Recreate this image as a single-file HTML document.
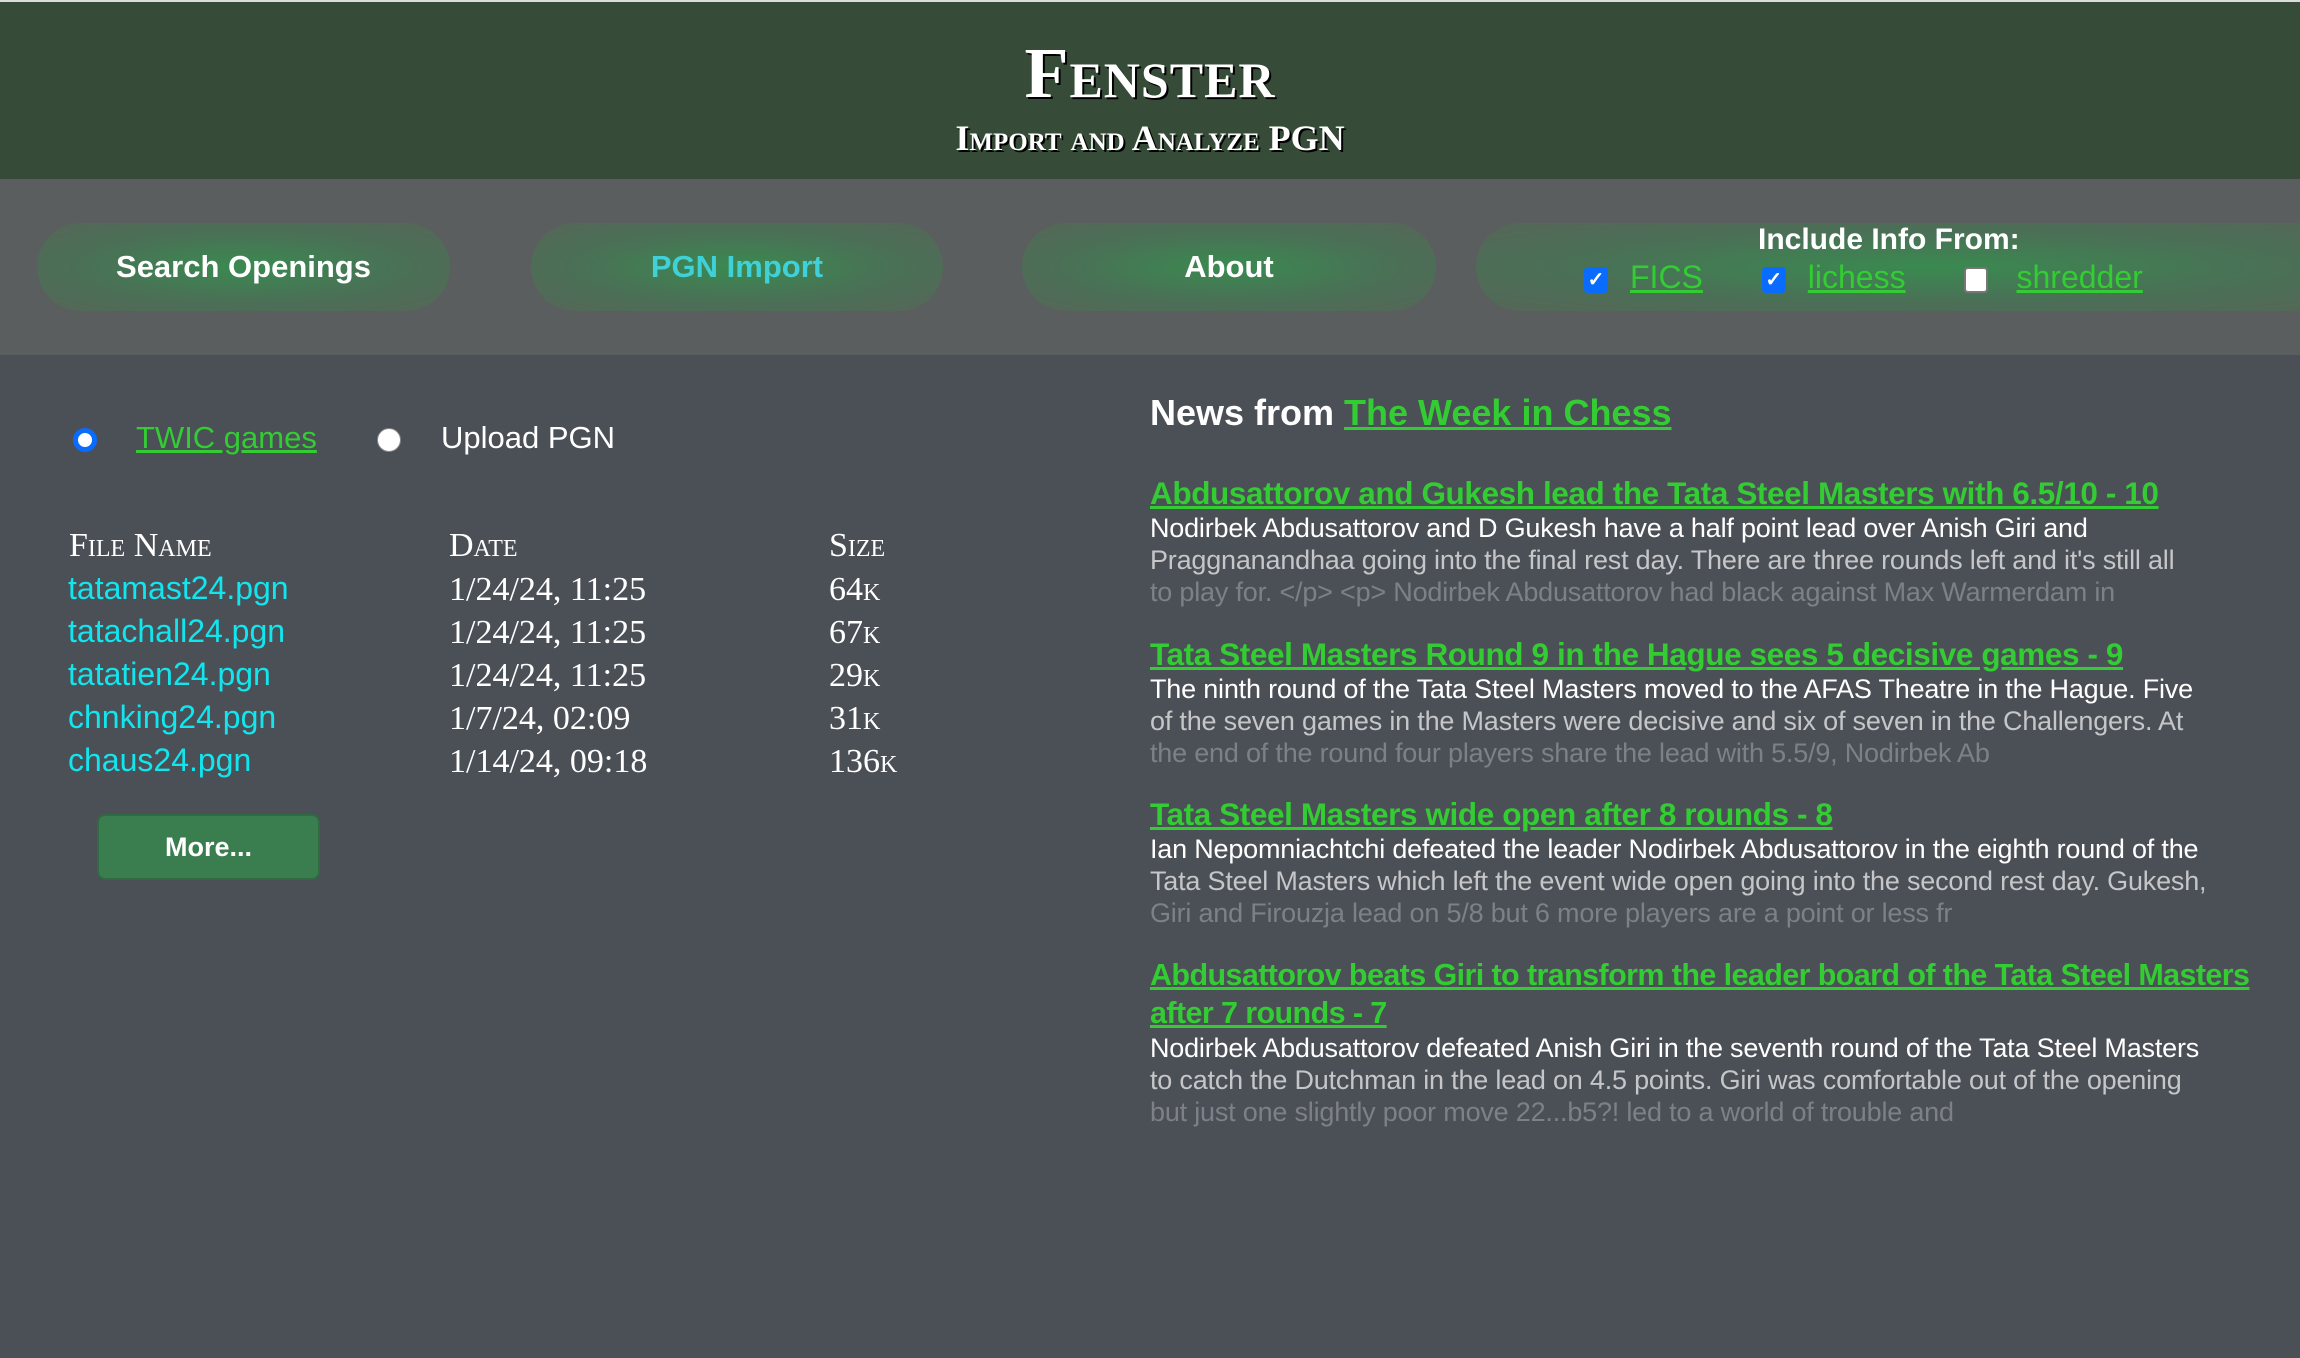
<!DOCTYPE html>
<html><head><meta charset="utf-8">
<style>
*{margin:0;padding:0;box-sizing:border-box}
html,body{width:2300px;height:1358px;overflow:hidden;background:#4b4f56;font-family:"Liberation Sans",sans-serif}
.top{position:absolute;left:0;top:0;width:2300px;height:2px;background:#ddd}
.hdr{position:absolute;left:0;top:2px;width:2300px;height:177px;background:#364b38;text-align:center;color:#fff;font-family:"Liberation Serif",serif;text-shadow:2px 2px 0 #000}
.hdr h1{position:absolute;left:0;right:0;top:30px;font-size:72px;font-variant:small-caps;font-weight:bold;letter-spacing:1px}
.hdr h2{position:absolute;left:0;right:0;top:115px;font-size:36px;font-variant:small-caps;font-weight:bold}
.nav{position:absolute;left:0;top:179px;width:2300px;height:176px;background:#5a5e5f}
.pill{position:absolute;top:44px;height:88px;border-radius:44px;background:radial-gradient(ellipse at center,#3a8a50 0%,#4a7056 55%,#566658 100%);color:#fff;font-weight:bold;font-size:31px;text-align:center;line-height:88px}
.news a,.g{color:#33cc33;text-decoration:underline}
.cb{display:inline-block;width:24px;height:26px;border-radius:4px;background:#0a6cff;color:#fff;font-size:20px;line-height:26px;text-align:center;vertical-align:middle;font-weight:bold}
.cbw{background:#fff;border:2px solid #777}
.radio{position:absolute;width:24px;height:24px;border-radius:50%}
.tbl{position:absolute;font-family:"Liberation Serif",serif;font-variant:small-caps;color:#fff;font-size:34px}
.fn{position:absolute;left:68px;color:#11e5ee;font-size:32px}
.news{position:absolute;left:1150px;color:#fff}
.it{position:absolute;left:1150px;white-space:nowrap}
.it .t{font-weight:bold;font-size:31.5px;letter-spacing:-0.4px;line-height:38px}
.it .t a{color:#33cc33}
.it .b{font-size:27px;line-height:32px;letter-spacing:-0.2px}
.l1{color:#fff}.l2{color:#c4c6c8}.l3{color:#7d8187}
</style></head><body>
<div class="top"></div>
<div class="hdr"><h1>Fenster</h1><h2>Import and Analyze PGN</h2></div>
<div class="nav">
 <div class="pill" style="left:37px;width:413px">Search Openings</div>
 <div class="pill" style="left:531px;width:412px;color:#3fd0d8">PGN Import</div>
 <div class="pill" style="left:1022px;width:414px">About</div>
 <div class="pill" style="left:1476px;width:900px;line-height:normal">
  <div style="position:absolute;left:282px;top:0px;font-size:30px;white-space:nowrap">Include Info From:</div>
  <div style="position:absolute;left:108px;top:36px;white-space:nowrap;font-size:32px;font-weight:normal">
   <span class="cb">✓</span><span class="g" style="margin-left:22px">FICS</span>
   <span class="cb" style="margin-left:50px">✓</span><span class="g" style="margin-left:22px">lichess</span>
   <span class="cb cbw" style="margin-left:50px"></span><span class="g" style="margin-left:28px">shredder</span>
  </div>
 </div>
</div>
<div class="radio" style="left:73px;top:428px;border:5px solid #0a6cff;background:#fff"></div>
<div style="position:absolute;left:136px;top:420px;font-size:31px" class="g">TWIC games</div>
<div class="radio" style="left:377px;top:428px;background:#fff;border:1px solid #888"></div>
<div style="position:absolute;left:441px;top:420px;font-size:31px;color:#fff">Upload PGN</div>
<div class="tbl" style="left:69px;top:527px">File Name</div>
<div class="tbl" style="left:449px;top:527px">Date</div>
<div class="tbl" style="left:829px;top:527px">Size</div>
<div class="fn" style="top:570px">tatamast24.pgn</div>
<div class="fn" style="top:613px">tatachall24.pgn</div>
<div class="fn" style="top:656px">tatatien24.pgn</div>
<div class="fn" style="top:699px">chnking24.pgn</div>
<div class="fn" style="top:742px">chaus24.pgn</div>
<div class="tbl" style="left:449px;top:568px;line-height:43px">1/24/24, 11:25<br>1/24/24, 11:25<br>1/24/24, 11:25<br>1/7/24, 02:09<br>1/14/24, 09:18</div>
<div class="tbl" style="left:829px;top:568px;line-height:43px">64k<br>67k<br>29k<br>31k<br>136k</div>
<div style="position:absolute;left:97px;top:814px;width:223px;height:66px;background:#3a7d4e;border:2px solid #2f6a41;border-radius:8px;color:#fff;font-weight:bold;font-size:27px;text-align:center;line-height:62px">More...</div>
<div class="news" style="top:392px;font-size:36px;font-weight:bold">News from <a href="#">The Week in Chess</a></div>
<div class="it" style="top:474px"><div class="t"><a href="#">Abdusattorov and Gukesh lead the Tata Steel Masters with 6.5/10 - 10</a></div>
<div class="b"><div class="l1">Nodirbek Abdusattorov and D Gukesh have a half point lead over Anish Giri and</div><div class="l2">Praggnanandhaa going into the final rest day. There are three rounds left and it's still all</div><div class="l3">to play for. &lt;/p&gt; &lt;p&gt; Nodirbek Abdusattorov had black against Max Warmerdam in</div></div></div>
<div class="it" style="top:635px"><div class="t"><a href="#">Tata Steel Masters Round 9 in the Hague sees 5 decisive games - 9</a></div>
<div class="b"><div class="l1">The ninth round of the Tata Steel Masters moved to the AFAS Theatre in the Hague. Five</div><div class="l2">of the seven games in the Masters were decisive and six of seven in the Challengers. At</div><div class="l3">the end of the round four players share the lead with 5.5/9, Nodirbek Ab</div></div></div>
<div class="it" style="top:795px"><div class="t"><a href="#">Tata Steel Masters wide open after 8 rounds - 8</a></div>
<div class="b"><div class="l1">Ian Nepomniachtchi defeated the leader Nodirbek Abdusattorov in the eighth round of the</div><div class="l2">Tata Steel Masters which left the event wide open going into the second rest day. Gukesh,</div><div class="l3">Giri and Firouzja lead on 5/8 but 6 more players are a point or less fr</div></div></div>
<div class="it" style="top:956px"><div class="t" style="font-size:30.5px;letter-spacing:-0.6px"><a href="#">Abdusattorov beats Giri to transform the leader board of the Tata Steel Masters<br>after 7 rounds - 7</a></div>
<div class="b"><div class="l1">Nodirbek Abdusattorov defeated Anish Giri in the seventh round of the Tata Steel Masters</div><div class="l2">to catch the Dutchman in the lead on 4.5 points. Giri was comfortable out of the opening</div><div class="l3">but just one slightly poor move 22...b5?! led to a world of trouble and</div></div></div>
</body></html>
